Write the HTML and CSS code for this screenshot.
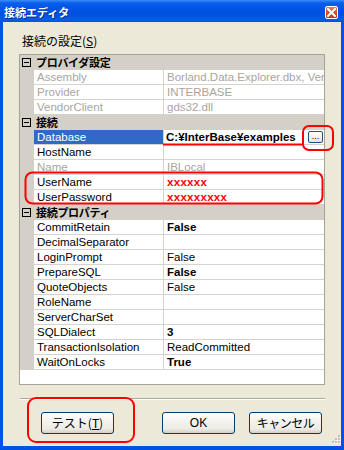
FILE: index.html
```html
<!DOCTYPE html>
<html>
<head>
<meta charset="utf-8">
<link rel="stylesheet" href="styles.css">
</head>
<body>
<div class="window">
  <div class="titlebar">
    <span class="title">接続エディタ</span>
    <span class="close"><svg width="9" height="9" viewBox="0 0 9 9"><path d="M1 1L8 8M8 1L1 8" stroke="#fff" stroke-width="2" stroke-linecap="square"/></svg></span>
  </div>
  <div class="client">
    <div class="label">接続の設定(<u>S</u>)</div>
    <div class="grid">
      <div class="row cat"><div class="gut"><span class="minus"></span></div><div class="catname">プロバイダ設定</div></div>
      <div class="row"><div class="gut"></div><div class="name ro">Assembly</div><div class="val ro">Borland.Data.Explorer.dbx, Vers</div></div>
      <div class="row"><div class="gut"></div><div class="name ro">Provider</div><div class="val ro">INTERBASE</div></div>
      <div class="row"><div class="gut"></div><div class="name ro">VendorClient</div><div class="val ro">gds32.dll</div></div>
      <div class="row cat"><div class="gut"><span class="minus"></span></div><div class="catname">接続</div></div>
      <div class="row"><div class="gut"></div><div class="name sel">Database</div><div class="val edit"><span class="etext">C:¥InterBase¥examples</span><span class="ell">...</span></div></div>
      <div class="row"><div class="gut"></div><div class="name">HostName</div><div class="val"></div></div>
      <div class="row"><div class="gut"></div><div class="name ro">Name</div><div class="val ro">IBLocal</div></div>
      <div class="row"><div class="gut"></div><div class="name">UserName</div><div class="val red">xxxxxx</div></div>
      <div class="row"><div class="gut"></div><div class="name">UserPassword</div><div class="val red">xxxxxxxxx</div></div>
      <div class="row cat"><div class="gut"><span class="minus"></span></div><div class="catname">接続プロパティ</div></div>
      <div class="row"><div class="gut"></div><div class="name">CommitRetain</div><div class="val b">False</div></div>
      <div class="row"><div class="gut"></div><div class="name">DecimalSeparator</div><div class="val"></div></div>
      <div class="row"><div class="gut"></div><div class="name">LoginPrompt</div><div class="val">False</div></div>
      <div class="row"><div class="gut"></div><div class="name">PrepareSQL</div><div class="val b">False</div></div>
      <div class="row"><div class="gut"></div><div class="name">QuoteObjects</div><div class="val">False</div></div>
      <div class="row"><div class="gut"></div><div class="name">RoleName</div><div class="val"></div></div>
      <div class="row"><div class="gut"></div><div class="name">ServerCharSet</div><div class="val"></div></div>
      <div class="row"><div class="gut"></div><div class="name">SQLDialect</div><div class="val b">3</div></div>
      <div class="row"><div class="gut"></div><div class="name">TransactionIsolation</div><div class="val">ReadCommitted</div></div>
      <div class="row"><div class="gut"></div><div class="name">WaitOnLocks</div><div class="val b">True</div></div>
    </div>
    <div class="sep"></div>
    <div class="buttons">
      <button class="btn">テスト(<u>T</u>)</button>
      <button class="btn ok">OK</button>
      <button class="btn cancel">キャンセル</button>
    </div>
  </div>
  <svg class="grip" width="10" height="10" viewBox="0 0 10 10">
    <g fill="#fff"><rect x="8" y="1" width="2" height="2"/><rect x="5" y="4" width="2" height="2"/><rect x="8" y="4" width="2" height="2"/><rect x="2" y="7" width="2" height="2"/><rect x="5" y="7" width="2" height="2"/><rect x="8" y="7" width="2" height="2"/></g>
    <g fill="#C2BFB0"><rect x="7" y="0" width="2" height="2"/><rect x="4" y="3" width="2" height="2"/><rect x="7" y="3" width="2" height="2"/><rect x="1" y="6" width="2" height="2"/><rect x="4" y="6" width="2" height="2"/><rect x="7" y="6" width="2" height="2"/></g>
  </svg>
  <svg class="annot" width="344" height="450" viewBox="0 0 344 450">
    <g fill="none" stroke="#FF0000" stroke-width="2">
      <rect x="303" y="126" width="30" height="24" rx="6"/>
      <line x1="163" y1="144.5" x2="302" y2="144.5"/>
      <rect x="25.5" y="172.5" width="297" height="31" rx="7"/>
      <rect x="28" y="398" width="106" height="44" rx="8"/>
    </g>
  </svg>
</div>
</body>
</html>
```

FILE: styles.css
```css
html, body {
  margin: 0;
  padding: 0;
  background: #ECE9D8;
}
.window {
  position: relative;
  width: 344px;
  height: 450px;
  box-sizing: border-box;
  display: flex;
  flex-direction: column;
  background: #0052E6;
  font-family: "Liberation Sans", "Noto Sans CJK JP", sans-serif;
}
.titlebar {
  height: 22px;
  flex: none;
  display: flex;
  align-items: center;
  padding: 0 6px 0 4px;
  background: linear-gradient(to bottom, #3C8CF8 0px, #0A5EEC 3px, #0055E6 8px, #0050E0 14px, #0A5BEA 20px, #0350DA 22px);
}
.title {
  flex: 1;
  color: #fff;
  font-family: "Noto Sans CJK JP", sans-serif;
  font-weight: bold;
  font-size: 11px;
  line-height: 14px;
  margin-top: 2px;
  text-shadow: 1px 1px 0 #0A2C8A;
}
.close {
  width: 13px;
  height: 13px;
  box-sizing: border-box;
  margin-top: 2px;
  border: 1px solid #fff;
  border-radius: 2px;
  background: linear-gradient(to bottom, #E87A5E, #D8431C 60%, #C8381A);
  display: flex;
  align-items: center;
  justify-content: center;
}
.client {
  flex: 1;
  margin: 0 3px 4px 3px;
  background: #ECE9D8;
  display: flex;
  flex-direction: column;
}
.label {
  margin: 12px 0 0 19px;
  height: 14px;
  line-height: 14px;
  font-family: "Noto Sans CJK JP", sans-serif;
  font-size: 12px;
  color: #000;
}
.grid {
  margin: 6px 0 0 16px;
  width: 306px;
  height: 331px;
  box-sizing: border-box;
  border: 1px solid #A5A29A;
  background: #fff;
  overflow: hidden;
}
.row {
  display: flex;
  height: 15px;
  font-size: 11.5px;
  line-height: 14px;
  color: #000;
}
.gut {
  width: 14px;
  flex: none;
  background: #D4D0C8;
  position: relative;
}
.name {
  width: 130px;
  flex: none;
  box-sizing: border-box;
  padding-left: 3px;
  border-bottom: 1px solid #D6D3CE;
  border-right: 1px solid #D6D3CE;
  white-space: nowrap;
  overflow: hidden;
}
.val {
  flex: 1;
  min-width: 0;
  padding-left: 3px;
  border-bottom: 1px solid #D6D3CE;
  white-space: nowrap;
  overflow: hidden;
}
.ro { color: #A8A5A0; }
.b { font-weight: bold; }
.red { color: #FF0000; font-weight: bold; letter-spacing: 0.3px; }
.sel { background: #316AC5; color: #fff; }
.edit {
  display: flex;
  padding-left: 2px;
  padding-right: 1px;
}
.etext {
  flex: 1;
  min-width: 0;
  overflow: hidden;
  font-weight: bold;
}
.ell {
  flex: none;
  width: 15px;
  height: 12px;
  margin-top: 1px;
  box-sizing: border-box;
  border: 1px solid #1C5180;
  border-radius: 2px;
  background: linear-gradient(to bottom, #fff, #E6E4DC);
  font-size: 9px;
  line-height: 8px;
  text-align: center;
  color: #000;
}
.cat {
  background: #D4D0C8;
}
.catname {
  flex: 1;
  padding-left: 2px;
  font-family: "Noto Sans CJK JP", sans-serif;
  font-weight: bold;
  font-size: 11px;
  line-height: 15px;
  letter-spacing: -0.3px;
}
.minus {
  position: absolute;
  left: 2px;
  top: 3px;
  width: 9px;
  height: 9px;
  box-sizing: border-box;
  border: 1px solid #000;
}
.minus::after {
  content: "";
  position: absolute;
  left: 1px;
  top: 3px;
  width: 5px;
  height: 1px;
  background: #000;
}
.sep {
  margin: 13px 0 0 17px;
  width: 305px;
  height: 1px;
  background: #ACA899;
  border-bottom: 1px solid #fff;
}
.buttons {
  display: flex;
  margin: 12px 0 0 38px;
}
.btn {
  width: 73px;
  height: 22px;
  box-sizing: border-box;
  padding: 0;
  border: 1px solid #003C74;
  border-radius: 3px;
  background: linear-gradient(to bottom, #FFFFFF 0%, #F4F3EE 40%, #ECEBE4 80%, #D6D0C5 100%);
  font-family: "Noto Sans CJK JP", sans-serif;
  font-size: 12px;
  line-height: 18px;
  color: #000;
}
.ok { margin-left: 48px; font-family: "Liberation Sans", sans-serif; }
.cancel { margin-left: 14px; letter-spacing: -0.5px; }
.grip {
  position: absolute;
  right: 3px;
  bottom: 5px;
}
.annot {
  position: absolute;
  left: 0;
  top: 0;
  pointer-events: none;
}
```
